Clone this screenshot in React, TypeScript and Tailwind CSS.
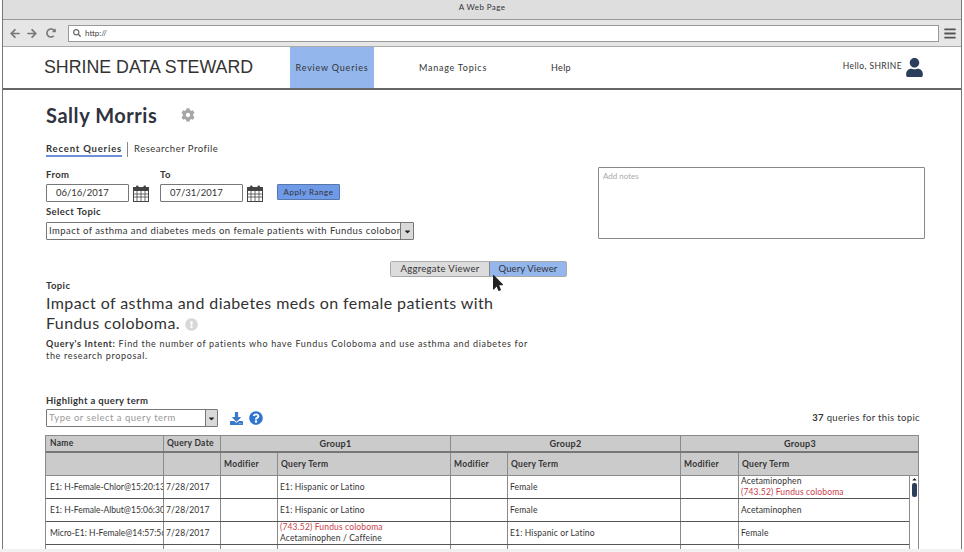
import {
  FaArrowLeft,
  FaArrowRight,
  FaBars,
  FaCaretDown,
  FaCog,
  FaDownload,
  FaExclamationCircle,
  FaMousePointer,
  FaQuestionCircle,
  FaRedoAlt,
  FaSearch,
  FaUser,
} from 'react-icons/fa';

const COLS = 'grid grid-cols-[117px_57px_57px_173px_57px_173px_58px_171px]';

const rows = [
  {
    name: 'E1: H-Female-Chlor@15:20:13',
    date: '7/28/2017',
    g1: [{ text: 'E1: Hispanic or Latino' }],
    g2: [{ text: 'Female' }],
    g3: [{ text: 'Acetaminophen' }, { text: '(743.52) Fundus coloboma', red: true }],
  },
  {
    name: 'E1: H-Female-Albut@15:06:30',
    date: '7/28/2017',
    g1: [{ text: 'E1: Hispanic or Latino' }],
    g2: [{ text: 'Female' }],
    g3: [{ text: 'Acetaminophen' }],
  },
  {
    name: 'Micro-E1: H-Female@14:57:56',
    date: '7/28/2017',
    g1: [{ text: '(743.52) Fundus coloboma', red: true }, { text: 'Acetaminophen / Caffeine' }],
    g2: [{ text: 'E1: Hispanic or Latino' }],
    g3: [{ text: 'Female' }],
  },
];

type Term = { text: string; red?: boolean };

function Terms({ items }: { items: Term[] }) {
  return (
    <div className="flex flex-col justify-center border-l border-[#8a8a8a] px-[2px] leading-[11px] overflow-hidden whitespace-nowrap tracking-[0.15px]">
      {items.map((t) => (
        <span key={t.text} className={t.red ? 'text-[#c8404a]' : ''}>
          {t.text}
        </span>
      ))}
    </div>
  );
}

function CalendarIcon() {
  return (
    <svg width="16" height="17" viewBox="0 0 16 17" className="text-[#444]">
      <rect x="0.5" y="2.5" width="15" height="14" fill="#fff" stroke="currentColor" />
      <rect x="0.5" y="2.5" width="15" height="3.5" fill="currentColor" />
      <rect x="3" y="0.5" width="2.5" height="4" rx="1" fill="currentColor" />
      <rect x="10.5" y="0.5" width="2.5" height="4" rx="1" fill="currentColor" />
      <path d="M4 6v10M8 6v10M12 6v10M1 9h14M1 12h14" stroke="currentColor" strokeWidth="0.8" fill="none" />
    </svg>
  );
}

function DateField({ value }: { value: string }) {
  return (
    <div className="flex items-center gap-[4px]">
      <div className="w-[83px] h-[18px] border border-[#777] rounded-[1px] pl-[9px] flex items-center text-[9.5px]">
        {value}
      </div>
      <CalendarIcon />
    </div>
  );
}

function DropButton({ className }: { className: string }) {
  return (
    <div className={`flex items-center justify-center bg-[#d9d9d9] border-l border-[#777] ${className}`}>
      <FaCaretDown className="w-[9px] h-[9px] text-[#222]" />
    </div>
  );
}

export default function App() {
  return (
    <div
      className="relative w-[964px] h-[552px] overflow-hidden bg-white text-[#333] px-[2px]"
      style={{ fontFamily: 'Lato, "Open Sans", sans-serif' }}
    >
      <div className="h-full flex flex-col border-x border-[#777]">
        <div className="h-[20px] shrink-0 bg-[#dedede] border-b border-[#999] flex items-center justify-center pb-[6px] text-[8px] tracking-[0.4px]">
          A Web Page
        </div>
        <div className="h-[27px] shrink-0 bg-[#e6e6e6] border-b border-[#aaa] flex items-center pl-[6px] pr-[4px] text-[#777]">
          <FaArrowLeft className="w-[12px] h-[11px]" />
          <FaArrowRight className="w-[12px] h-[11px] ml-[5px]" />
          <FaRedoAlt className="w-[10px] h-[10px] ml-[8px]" />
          <div className="ml-[12px] w-[871px] h-[17px] bg-white border border-[#999] flex items-center pl-[4px] text-[8px] text-[#444]">
            <FaSearch className="w-[8px] h-[8px] mr-[4px] text-[#666]" />
            http://
          </div>
          <FaBars className="ml-[5px] w-[12px] h-[13px] text-[#555]" />
        </div>

        <div className="h-[43px] shrink-0 border-b-2 border-[#666] flex items-center">
          <div
            className="ml-[41px] w-[246px] text-[17.8px] text-[#333] whitespace-nowrap"
            style={{ fontFamily: '"Liberation Sans", sans-serif' }}
          >
            SHRINE DATA STEWARD
          </div>
          <div className="w-[84px] h-full bg-[#93b6ec] flex items-center justify-center text-[9px] tracking-[0.8px]">
            Review Queries
          </div>
          <div className="ml-[45px] text-[9px] tracking-[0.75px]">Manage Topics</div>
          <div className="ml-[64px] text-[9px] tracking-[0.3px]">Help</div>
          <div className="ml-auto flex items-center mr-[38px] gap-[4px] text-[8.5px] tracking-[0.4px]">
            <span className="-mt-[3px]">Hello, SHRINE</span>
            <FaUser className="w-[17px] h-[19px] text-[#2b3f5c]" />
          </div>
        </div>

        <div className="flex-1 min-h-0 pl-[43px] pr-[43px]">
          <div className="flex">
            <div className="w-[552px] shrink-0">
              <div className="h-[45px] pt-[4px] flex items-center">
                <span className="text-[20px] font-bold tracking-[0.55px] text-[#2f3340]">Sally Morris</span>
                <FaCog className="ml-[24px] w-[14px] h-[14px] text-[#a6a6a6]" />
              </div>
              <div className="mt-[6px] h-[17px] flex items-center text-[9.5px]">
                <span className="font-bold border-b-2 border-[#6f8fd6] h-[15px] leading-[13px] tracking-[0.8px]">Recent Queries</span>
                <span className="ml-[5px] h-[15px] border-l border-[#888] pl-[6px] leading-[13px] tracking-[0.5px]">Researcher Profile</span>
              </div>
              <div className="mt-[11px] flex text-[9.5px] font-bold tracking-[0.4px] h-[13px] items-center">
                <span className="w-[114px]">From</span>
                <span>To</span>
              </div>
              <div className="mt-[2px] flex items-start font-normal">
                <DateField value="06/16/2017" />
                <div className="w-[11px]" />
                <DateField value="07/31/2017" />
                <div className="ml-[14px] w-[63px] h-[16px] bg-[#6f9ae8] border border-[#5577aa] rounded-[1px] flex items-center justify-center text-[8px] tracking-[0.55px]">
                  Apply Range
                </div>
              </div>
              <div className="mt-[4px] h-[13px] flex items-center text-[9.5px] font-bold tracking-[0.4px]">Select Topic</div>
              <div className="mt-[3px] w-[368px] h-[18px] border border-[#777] rounded-[1px] flex text-[9.5px] tracking-[0.45px]">
                <div className="flex-1 overflow-hidden whitespace-nowrap pl-[2px] leading-[16px]">
                  Impact of asthma and diabetes meds on female patients with Fundus coloboma
                </div>
                <DropButton className="w-[13px] shrink-0" />
              </div>
            </div>
            <div className="mt-[77px] w-[327px] h-[72px] shrink-0 border border-[#888] rounded-[1px] px-[4px] py-[2px] text-[8px] text-[#aaa]">
              Add notes
            </div>
          </div>

          <div className="mt-[21px] ml-[344px] w-[177px] h-[16px] flex border border-[#aaa] rounded-[2px] text-[9.5px]">
            <div className="w-[98px] bg-[#dcdcdc] flex items-center justify-center tracking-[0.3px]">Aggregate Viewer</div>
            <div className="flex-1 bg-[#93b6ec] border-l border-[#888] flex items-center justify-center tracking-[0.1px]">Query Viewer</div>
          </div>

          <div className="mt-[2px] h-[14px] flex items-center text-[9.5px] font-bold tracking-[0.4px]">Topic</div>
          <div className="w-[480px] text-[16px] leading-[20px] tracking-[0.4px]">
            Impact of asthma and diabetes meds on female patients with Fundus coloboma.
            <FaExclamationCircle className="inline ml-[5px] w-[13px] h-[13px] text-[#d8d8d8]" />
          </div>
          <div className="mt-[5px] w-[490px] text-[9px] leading-[12px] tracking-[0.67px]">
            <b>Query's Intent:</b> Find the number of patients who have Fundus Coloboma and use asthma and diabetes for the research proposal.
          </div>

          <div className="mt-[33px] h-[13px] flex items-center text-[9.5px] font-bold tracking-[0.35px]">Highlight a query term</div>
          <div className="mt-[1px] flex items-center">
            <div className="w-[172px] h-[18px] border border-[#777] rounded-[1px] flex text-[9.5px] tracking-[0.5px] text-[#999]">
              <div className="flex-1 pl-[2px] leading-[16px]">Type or select a query term</div>
              <DropButton className="w-[12px]" />
            </div>
            <FaDownload className="ml-[11px] w-[15px] h-[13px] text-[#3a78c8]" />
            <FaQuestionCircle className="ml-[5px] w-[14px] h-[14px] text-[#2f74d0]" />
            <div className="ml-auto -mr-[2px] text-[9.5px] tracking-[0.35px]">
              <b>37</b> queries for this topic
            </div>
          </div>

          <div className="mt-[8px] w-[874px] ml-[-1px] text-[9px] font-bold">
            <div className="grid grid-cols-[117px_57px_230px_230px_239px] h-[18px] bg-[#cbcbcb] border-t border-x border-b-2 border-[#8a8a8a] border-b-[#777] items-stretch tracking-[0.3px]">
              <div className="pl-[4px] flex items-center text-[8.5px]">Name</div>
              <div className="pl-[3px] flex items-center border-l border-[#8a8a8a] text-[8.5px]">Query Date</div>
              <div className="flex items-center justify-center border-l border-[#8a8a8a]">Group1</div>
              <div className="flex items-center justify-center border-l border-[#8a8a8a]">Group2</div>
              <div className="flex items-center justify-center border-l border-[#8a8a8a]">Group3</div>
            </div>
            <div className={`${COLS} h-[23px] bg-[#cbcbcb] border-x border-b border-[#8a8a8a] tracking-[0.3px] text-[8.5px]`}>
              <div />
              <div className="border-l border-[#8a8a8a]" />
              {['Modifier', 'Query Term', 'Modifier', 'Query Term', 'Modifier', 'Query Term'].map((h, i) => (
                <div key={i} className="border-l border-[#8a8a8a] px-[3px] flex items-center">
                  {h}
                </div>
              ))}
            </div>
            <div className="relative font-normal text-[8.5px]">
              {rows.map((r) => (
                <div key={r.name} className={`${COLS} h-[23px] border-x border-b-[1.5px] border-x-[#8a8a8a] border-b-[#555]`}>
                  <div className="pl-[4px] flex items-center overflow-hidden whitespace-nowrap">{r.name}</div>
                  <div className="border-l border-[#8a8a8a] pl-[2px] flex items-center tracking-[0.15px]">{r.date}</div>
                  <div className="border-l border-[#8a8a8a]" />
                  <Terms items={r.g1} />
                  <div className="border-l border-[#8a8a8a]" />
                  <Terms items={r.g2} />
                  <div className="border-l border-[#8a8a8a]" />
                  <Terms items={r.g3} />
                </div>
              ))}
              <div className={`${COLS} h-[23px] border-x border-x-[#8a8a8a]`}>
                {Array.from({ length: 8 }).map((_, i) => (
                  <div key={i} className={i ? 'border-l border-[#8a8a8a]' : ''} />
                ))}
              </div>
              <div className="absolute top-0 right-0 w-[10px] h-[92px] bg-white border-x border-[#8a8a8a] flex flex-col items-center">
                <FaCaretDown className="w-[7px] h-[7px] rotate-180 text-[#222]" />
                <div className="w-[5px] h-[14px] rounded-[2px] bg-[#2b3f5c]" />
              </div>
            </div>
          </div>
        </div>
      </div>

      <div className="absolute left-0 right-0 bottom-0 h-[3px] bg-[#f1f1f1]" />
      <FaMousePointer className="absolute left-[493px] top-[275px] w-[10px] h-[16px] text-[#222] stroke-white" />
    </div>
  );
}
